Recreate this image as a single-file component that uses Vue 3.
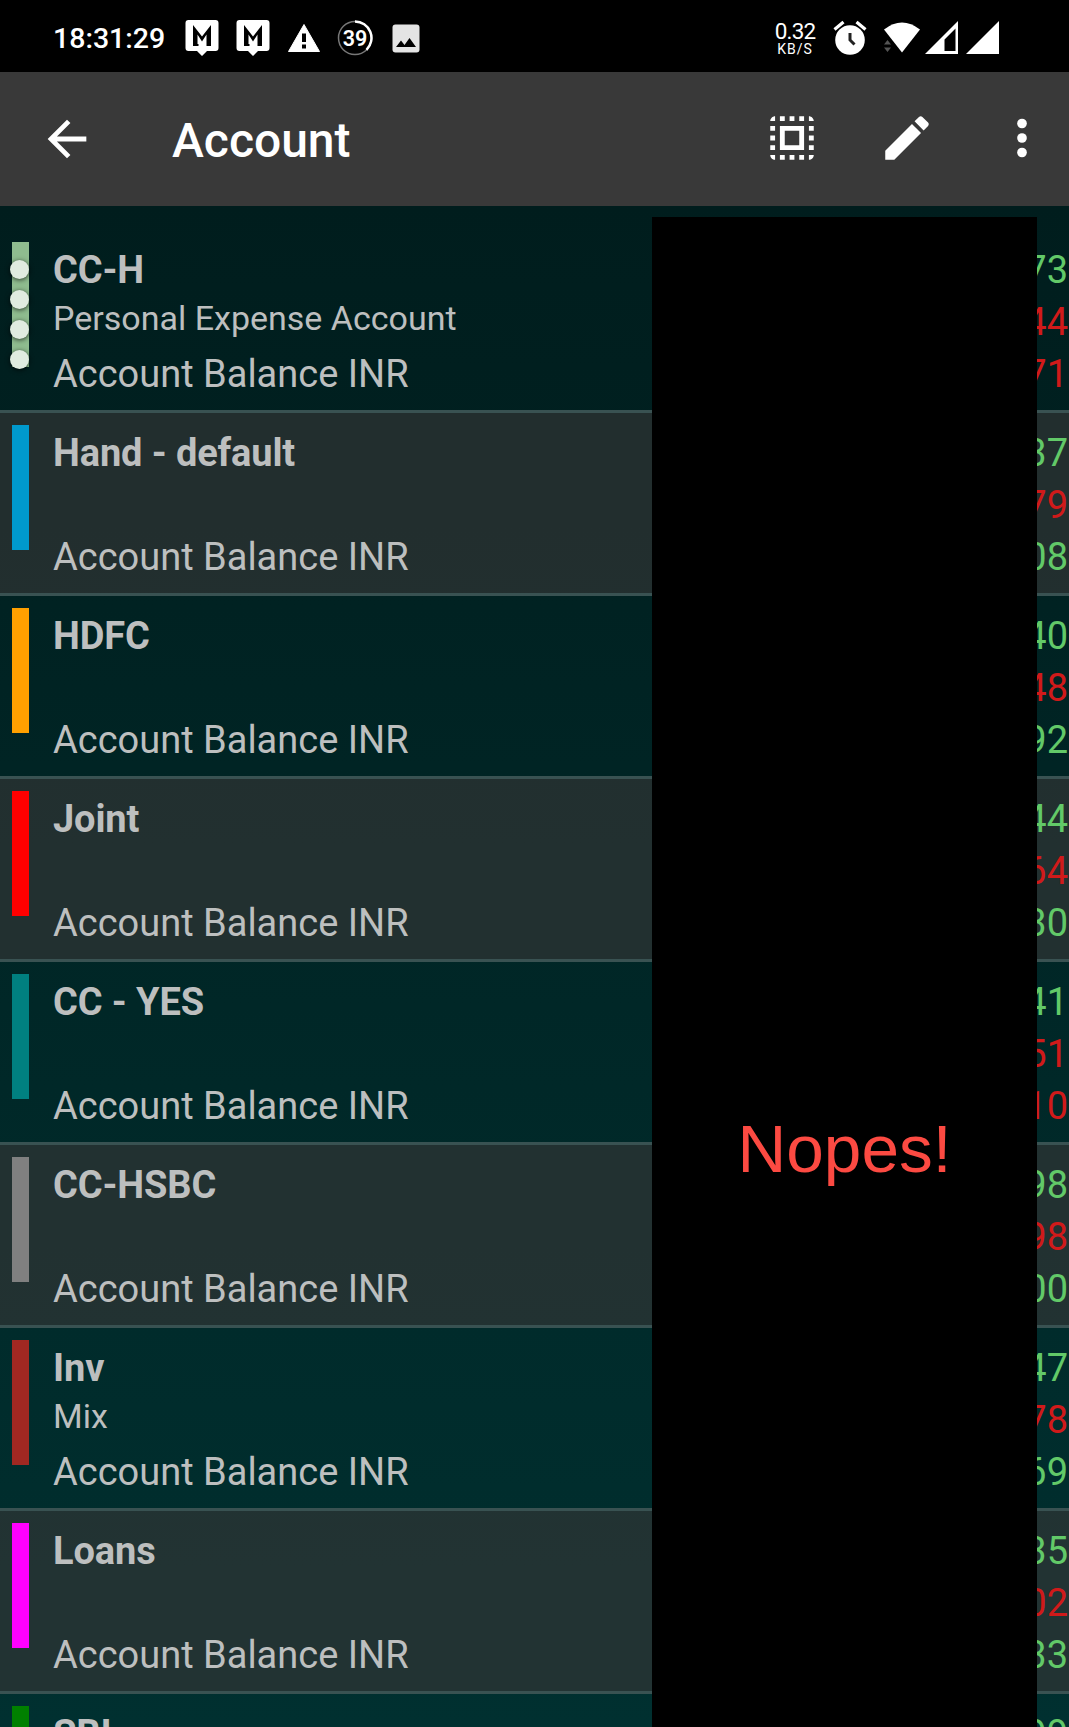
<script setup>
const accounts = [
  { name: 'CC-H', note: 'Personal Expense Account', color: '#8fbc8f', dots: 4, amounts: [['73', 'in'], ['44', 'out'], ['71', 'out']] },
  { name: 'Hand - default', note: '', color: '#0099cc', amounts: [['37', 'in'], ['79', 'out'], ['08', 'in']] },
  { name: 'HDFC', note: '', color: '#ffa000', amounts: [['40', 'in'], ['48', 'out'], ['92', 'in']] },
  { name: 'Joint', note: '', color: '#ff0000', amounts: [['44', 'in'], ['64', 'out'], ['30', 'in']] },
  { name: 'CC - YES', note: '', color: '#008080', amounts: [['41', 'in'], ['51', 'out'], ['10', 'out']] },
  { name: 'CC-HSBC', note: '', color: '#808080', amounts: [['98', 'in'], ['98', 'out'], ['00', 'in']] },
  { name: 'Inv', note: 'Mix', color: '#a02822', amounts: [['47', 'in'], ['78', 'out'], ['69', 'in']] },
  { name: 'Loans', note: '', color: '#ff00ff', amounts: [['35', 'in'], ['02', 'out'], ['33', 'in']] },
  { name: 'SBI', note: '', color: '#008000', partial: true, amounts: [['99', 'in']] },
]
</script>

<template>
  <div class="screen">
    <div class="status">
      <span class="clock">18:31:29</span>
      <svg v-for="n in 2" :key="n" class="msg" width="34" height="72" viewBox="0 0 34 72">
        <path fill="#fff" d="M3.500 20h27a3 3 0 0 1 3 3v25a3 3 0 0 1-3 3h-8.500L17 56l-5-5H3.500a3 3 0 0 1-3-3V23a3 3 0 0 1 3-3z" />
        <path fill="#000" d="M8 25l9 11.500L26 25v21h-4.500V34.500L17 41.500l-4.500-7v9.500h1v2H8z" />
      </svg>
      <svg class="warn" width="34" height="72" viewBox="0 0 34 72">
        <path fill="#fff" stroke="#fff" stroke-width="1" stroke-linejoin="round" d="M17 24.500L32.500 51.500h-31z" /><path fill="#000" d="M15 33.500h4v8.500h-4zM15 44.500h4v4h-4z" />
      </svg>
      <div class="ring">
        <svg width="36" height="72" viewBox="0 0 36 72" fill="none">
          <circle cx="18" cy="38" r="16.500" stroke="#777" stroke-width="1.500" />
          <path d="M18 21.500a16.500 16.500 0 0 1 11.500 28.300" stroke="#fff" stroke-width="2.500" />
        </svg>
        <span>39</span>
      </div>
      <svg class="pic" width="28" height="72" viewBox="0 0 28 72">
        <rect x=".5" y="24.500" width="27" height="28" rx="3" fill="#e4e4e4" />
        <path fill="#000" d="M4 47l5-6.500 3.500 4.500 5-7L24 47z" />
      </svg>
      <span class="spacer"></span>
      <div class="rate"><b>0.32</b><i>KB/S</i></div>
      <svg class="alarm" width="36" height="72" viewBox="0 0 36 72" fill="none">
        <circle cx="18" cy="40" r="14.800" fill="#fff" />
        <path d="M2.500 29.500l9-7.500M33.500 29.500l-9-7.500" stroke="#fff" stroke-width="3.200" />
        <path d="M18 33v7l4.500 4.500" stroke="#222" stroke-width="3" />
      </svg>
      <svg class="wifi" width="38" height="72" viewBox="0 0 38 72">
        <path fill="#fff" d="M1 29.500Q19 15.500 37 29.500L19 52.500z" />
        <path fill="#555" d="M1 44.500l3.500-4.500 3.500 4.500zM1 47.500h7l-3.500 4.500z" />
      </svg>
      <svg class="sig" width="34" height="72" viewBox="0 0 34 72">
        <path fill="#fff" fill-rule="evenodd" d="M33 21v33H0zM19.500 39.500V51H30.500V28.500z" />
      </svg>
      <svg class="sig2" width="34" height="72" viewBox="0 0 34 72"><path fill="#fff" d="M33 21v33H0z" /></svg>
    </div>

    <header class="toolbar">
      <svg class="back" width="58" height="58" viewBox="0 0 24 24" fill="#fff"><path d="M20 11H7.830l5.590-5.590L12 4l-8 8 8 8 1.410-1.410L7.830 13H20z" /></svg>
      <h1>Account</h1>
      <span class="spacer"></span>
      <svg width="58" height="58" viewBox="0 0 24 24" fill="#fff"><path d="M3 5h2V3c-1.100 0-2 .9-2 2zm0 8h2v-2H3v2zm4 8h2v-2H7v2zM3 9h2V7H3v2zm10-6h-2v2h2V3zm6 0v2h2c0-1.100-.9-2-2-2zM5 21v-2H3c0 1.100.9 2 2 2zm-2-4h2v-2H3v2zM9 3H7v2h2V3zm2 18h2v-2h-2v2zm8-8h2v-2h-2v2zm0 8c1.100 0 2-.9 2-2h-2v2zm0-12h2V7h-2v2zm0 8h2v-2h-2v2zm-4 4h2v-2h-2v2zm0-16h2V3h-2v2zM7 17h10V7H7v10zm2-8h6v6H9V9z" /></svg>
      <svg width="58" height="58" viewBox="0 0 24 24" fill="#fff"><path d="M3 17.250V21h3.750L17.810 9.940l-3.750-3.750L3 17.250zM20.710 7.040c.39-.39.39-1.020 0-1.410l-2.340-2.340c-.39-.39-1.020-.39-1.410 0l-1.830 1.830 3.750 3.750 1.830-1.830z" /></svg>
      <svg width="58" height="58" viewBox="0 0 24 24" fill="#fff"><circle cx="12" cy="6" r="2" /><circle cx="12" cy="12" r="2" /><circle cx="12" cy="18" r="2" /></svg>
    </header>

    <main class="list">
      <section v-for="(a, i) in accounts" :key="a.name" class="row" :class="{ alt: i % 2 }">
        <div class="bar" :style="{ background: a.color }">
          <span v-for="t in a.dots || 0" :key="t" class="dot"></span>
        </div>
        <div class="info">
          <div class="name">{{ a.name }}</div>
          <div class="note">{{ a.note }}</div>
          <div v-if="!a.partial" class="balance">Account Balance INR</div>
        </div>
        <div class="amounts">
          <div v-for="(m, k) in a.amounts" :key="k" :class="m[1]">{{ m[0] }}</div>
        </div>
      </section>
    </main>

    <div class="cover"><span>Nopes!</span></div>
  </div>
</template>

<style>
body { margin: 0; background: #000; }
</style>

<style scoped>
.screen { position: relative; width: 1069px; height: 1727px; overflow: hidden; display: flex; flex-direction: column; font-family: Roboto, sans-serif; color: #fff; }
svg { display: block; flex: none; }
.spacer { flex: 1; }
.status { height: 72px; flex: none; display: flex; background: #000; padding: 0 69px 0 53px; }
.clock { width: 132px; font-size: 28.500px; font-weight: 500; line-height: 77px; white-space: nowrap; }
.msg { margin-right: 17px; }
.ring { position: relative; margin: 0 19px 0 16px; }
.ring span { position: absolute; inset: 0; text-align: center; font-size: 21.500px; font-weight: 600; line-height: 78px; }
.rate { width: 42px; margin-right: 16px; text-align: center; padding-top: 19px; }
.rate b { display: block; font-weight: 400; font-size: 22.500px; line-height: 24px; letter-spacing: -.8px; }
.rate i { display: block; font-style: normal; font-size: 14px; line-height: 12px; letter-spacing: 1px; }
.alarm { margin-right: 15px; }
.wifi { margin-right: 4px; }
.sig { margin-right: 7px; }
.toolbar { height: 132px; flex: none; display: flex; align-items: center; gap: 57px; background: #393939; padding: 0 18px 2px 38px; }
.toolbar .back { margin-top: 2px; }
h1 { margin: 6px 0 0 19px; font-size: 48px; font-weight: 500; line-height: 60px; }
.list { flex: 1; overflow: hidden; padding-top: 24px; background: linear-gradient(#001d1d, #003030); }
.row { display: flex; height: 180px; border-bottom: 3px solid #395252; }
.alt { background: rgba(51, 54, 54, .67); }
.bar { box-sizing: border-box; width: 17px; height: 125px; margin: 12px 24px 0 12px; padding-top: 18px; display: flex; flex-direction: column; align-items: center; gap: 11px; }
.dot { flex: none; width: 19px; height: 19px; margin-left: -2px; border-radius: 50%; background: #e0ebe0; box-shadow: 0 1px 5px rgba(0, 0, 0, .7); }
.info { flex: 1; padding-top: 16px; color: #bdbfbf; white-space: nowrap; }
.name { font-size: 38px; line-height: 48px; font-weight: 700; letter-spacing: -.12px; }
.note { height: 50px; font-size: 34px; line-height: 48px; }
.balance { font-size: 38px; line-height: 60px; }
.amounts { padding: 14px 1px 0 0; text-align: right; font-size: 38px; line-height: 52px; }
.in { color: #62c968; }
.out { color: #d01a1a; }
.cover { position: absolute; left: 652px; top: 217px; width: 385px; height: 1510px; background: #000; display: flex; justify-content: center; }
.cover span { margin-top: 894px; font-family: "Liberation Sans", sans-serif; font-size: 67.500px; line-height: 76px; height: 76px; color: #fc4a42; }
</style>
